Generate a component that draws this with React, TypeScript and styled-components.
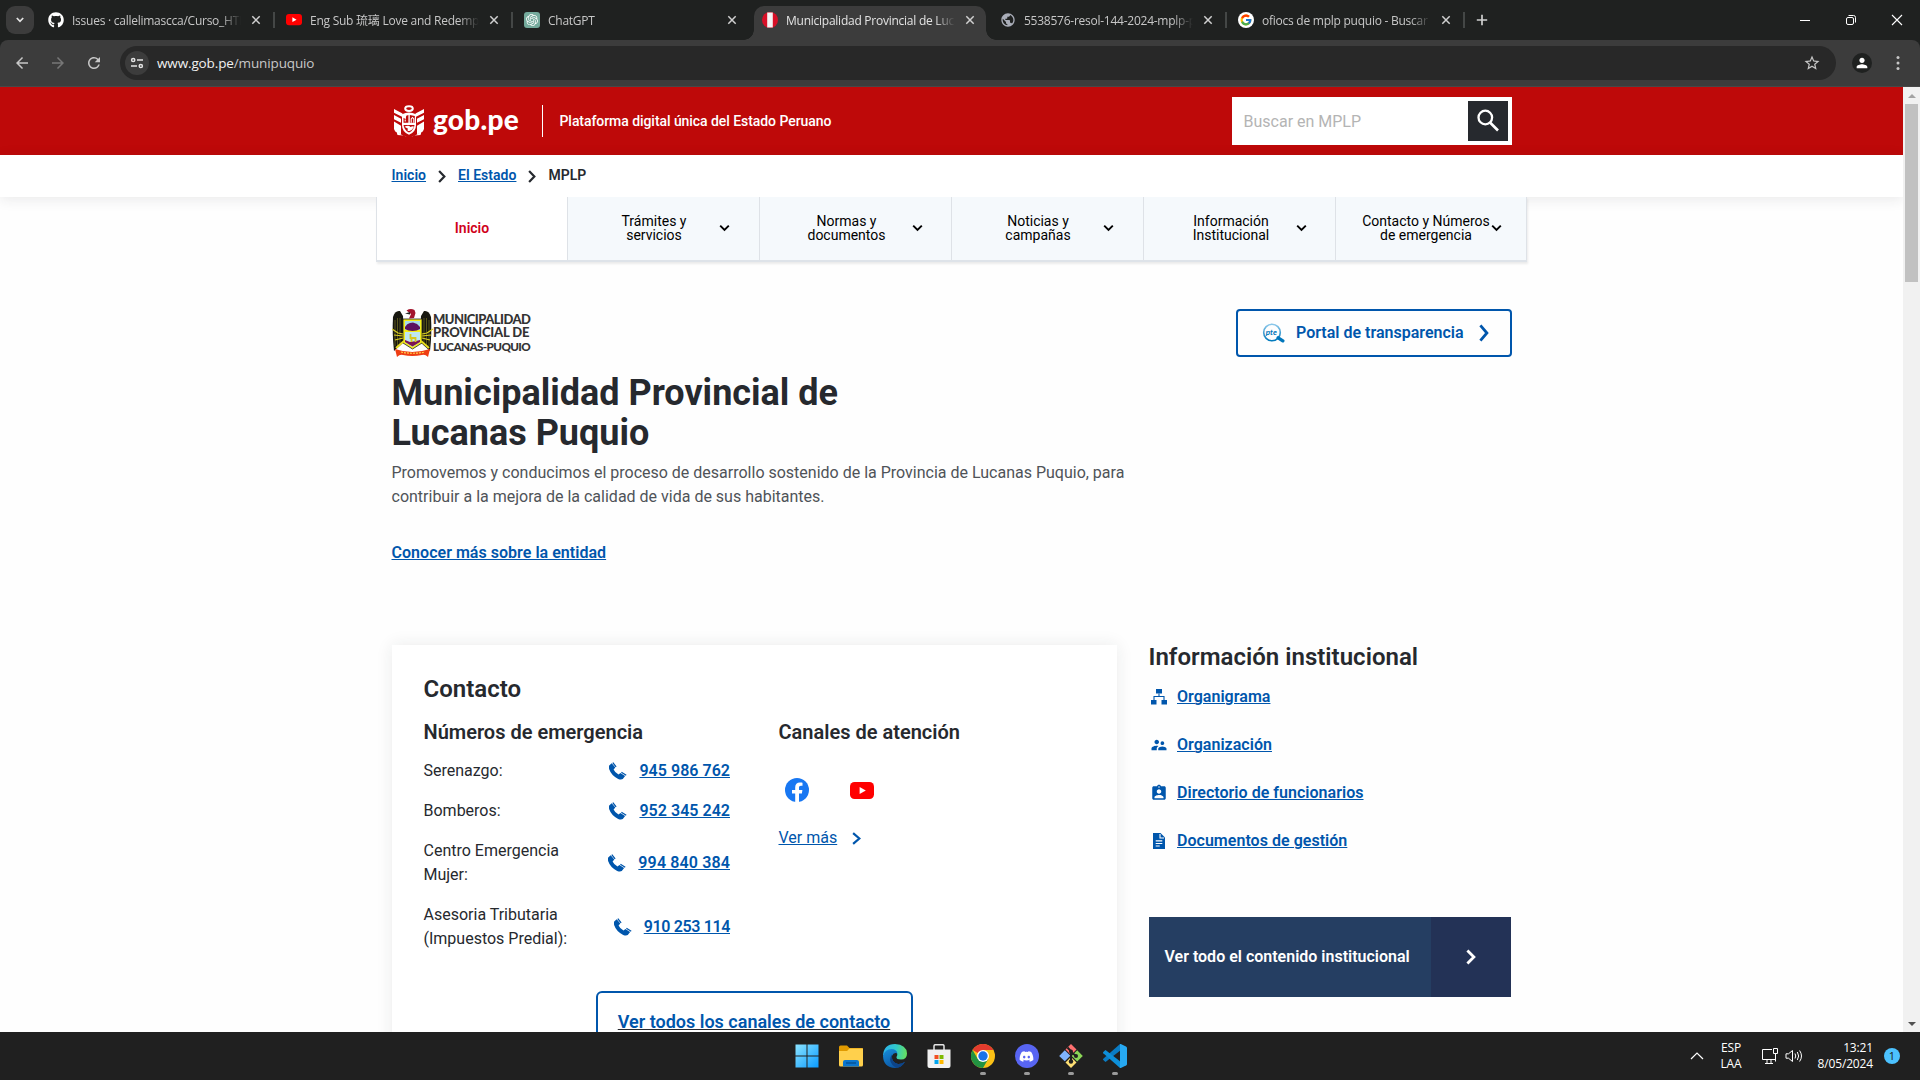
import React from 'react';
import styled, { createGlobalStyle, css } from 'styled-components';
import { FaGithub, FaDiscord } from 'react-icons/fa';
import { SiOpenai } from 'react-icons/si';
import { FcGoogle } from 'react-icons/fc';
import {
  MdSupervisorAccount,
  MdAssignmentInd,
  MdStarBorder,
  MdRefresh,
  MdArrowBack,
  MdArrowForward,
  MdPerson,
  MdPublic,
} from 'react-icons/md';

const ui = '"Open Sans", "Noto Sans", "Noto Sans CJK TC", sans-serif';
const blue = '#0056ac';
const ink = '#26292e';

const Global = createGlobalStyle`
  * { box-sizing: border-box; }
  html, body { margin: 0; padding: 0; overflow: hidden; background: #202020; }
  body { font-family: Roboto, "Liberation Sans", sans-serif; color: ${ink}; }
  svg { display: block; flex: none; }
  h1, h2, h3, p, ul { margin: 0; padding: 0; font-weight: 400; list-style: none; }
`;

const Screen = styled.div`
  width: 1920px;
  height: 1080px;
  display: flex;
  flex-direction: column;
  overflow: hidden;
`;

/* ---------- browser chrome ---------- */

const TabStrip = styled.div`
  height: 40px;
  flex: none;
  display: flex;
  align-items: flex-end;
  background: #1f2120;
  padding-left: 6px;
  font-family: ${ui};
`;

const TabSearch = styled.div`
  width: 28px;
  height: 28px;
  margin: 0 4px 6px 0;
  border-radius: 9px;
  background: #3c3c3c;
  display: grid;
  place-items: center;
`;

const Tab = styled.div<{ $active?: boolean; $sep?: boolean }>`
  position: relative;
  width: 238px;
  height: 34px;
  flex: none;
  display: flex;
  align-items: center;
  padding: 0 15px 6px 10px;
  font-size: 12px;
  color: ${p => (p.$active ? '#e3e3e3' : '#c7c7c7')};
  ${p =>
    p.$active &&
    css`
      &::before {
        content: '';
        position: absolute;
        inset: 0 4px 0 2px;
        border-radius: 10px 10px 0 0;
        background: #3c3c3c;
      }
      &::after {
        content: '';
        position: absolute;
        left: -8px;
        right: -6px;
        bottom: 0;
        height: 10px;
        background: radial-gradient(circle at 0 0, transparent 9.5px, #3c3c3c 10px) left / 10px 10px no-repeat,
          radial-gradient(circle at 100% 0, transparent 9.5px, #3c3c3c 10px) right / 10px 10px no-repeat;
      }
    `}
  ${p =>
    p.$sep &&
    css`
      background: linear-gradient(#444746, #444746) right 1px top 6px / 2px 16px no-repeat;
    `}
  > * {
    position: relative;
  }
`;

const TabTitle = styled.span`
  flex: 1;
  min-width: 0;
  margin: 0 10px 0 8px;
  overflow: hidden;
  white-space: nowrap;
  letter-spacing: -0.25px;
  mask-image: linear-gradient(90deg, #000 88%, transparent);
`;

const NewTab = styled.div`
  width: 32px;
  height: 34px;
  padding: 0 0 6px;
  display: grid;
  place-items: center;
`;

const WindowControls = styled.div`
  margin-left: auto;
  height: 40px;
  display: flex;
  > svg {
    margin: 14px 17px 0 17px;
  }
`;

const Toolbar = styled.div`
  height: 47px;
  display: flex;
  align-items: center;
  padding: 0 0 1px 13px;
  background: #3c3c3c;
  border-bottom: 1px solid #474747;
  border-radius: 8px 8px 0 0;
  color: #c7c7c7;
  font-family: ${ui};
`;

const ToolbarWrap = styled.div`
  background: #1f2120;
  flex: none;
`;

const NavIcon = styled.div<{ $dim?: boolean }>`
  width: 36px;
  height: 18px;
  display: flex;
  font-size: 18px;
  color: ${p => (p.$dim ? '#777' : '#c7c7c7')};
`;

const Omnibox = styled.div`
  width: 1716px;
  height: 34px;
  margin-left: -1px;
  border-radius: 17px;
  background: #282828;
  display: flex;
  align-items: center;
  padding: 0 15px 0 5px;
`;

const SiteInfo = styled.div`
  width: 24px;
  height: 24px;
  border-radius: 12px;
  background: #3c3c3c;
  display: grid;
  place-items: center;
`;

const Url = styled.span`
  flex: 1;
  margin-left: 8px;
  font-size: 13.5px;
  letter-spacing: -0.13px;
  color: #c7c7c7;
  b {
    font-weight: 400;
    color: #f1f1f1;
  }
`;

const Profile = styled.div`
  width: 20px;
  height: 20px;
  margin: 0 24px 0 16px;
  border-radius: 10px;
  background: #1f2120;
  color: #fff;
  display: grid;
  place-items: center;
`;

/* ---------- page ---------- */

const Viewport = styled.div`
  height: 945px;
  flex: none;
  display: flex;
  overflow: hidden;
  background: #fefefe;
`;

const Page = styled.main`
  width: 1903px;
  height: 945px;
  overflow: hidden;
`;

const Container = styled.div`
  width: 1152px;
  margin: 0 auto;
  padding: 0 16px;
`;

const RedBar = styled.header`
  height: 68px;
  background: #be0909;
  color: #fff;
`;

const RedInner = styled(Container)`
  height: 68px;
  display: flex;
  align-items: center;
  > svg {
    margin: -1px 0 0 1.5px;
  }
`;

const Brand = styled.span`
  width: 86px;
  margin: -5px 0 0 8px;
  font: 900 28px/34px Lato, sans-serif;
  letter-spacing: 0.25px;
  white-space: nowrap;
`;

const Tagline = styled.span`
  margin: -1px 0 0 23px;
  padding: 8px 0 8px 16.5px;
  border-left: 1px solid #fff;
  font-size: 14px;
  line-height: 16px;
  letter-spacing: -0.06px;
  font-weight: 500;
  white-space: nowrap;
`;

const Search = styled.div`
  width: 280px;
  height: 48px;
  margin-left: auto;
  padding: 4px 4px 4px 12px;
  display: flex;
  align-items: center;
  justify-content: space-between;
  background: #fff;
  color: #b4b4b4;
  font-size: 16px;
`;

const SearchButton = styled.div`
  width: 40px;
  height: 40px;
  background: ${ink};
  display: grid;
  place-items: center;
`;

const CrumbBar = styled.div`
  position: relative;
  height: 42px;
  background: #fff;
  box-shadow: 0 2px 14px rgba(38, 41, 46, 0.1);
`;

const Crumbs = styled(Container)`
  height: 42px;
  padding-bottom: 2px;
  display: flex;
  align-items: center;
  font-size: 14px;
  font-weight: 600;
  > svg {
    margin: 2px 12px 0 12px;
  }
`;

const Anchor = styled.a<{ $size?: number; $weight?: number; $spacing?: number }>`
  color: ${blue};
  font-size: ${p => p.$size ?? 16}px;
  font-weight: ${p => p.$weight ?? 600};
  letter-spacing: ${p => p.$spacing ?? 0.03}px;
  text-decoration: underline;
  text-underline-offset: 1px;
  text-decoration-thickness: 1px;
  text-decoration-skip-ink: auto;
  white-space: nowrap;
`;

const Menu = styled.nav`
  position: relative;
  width: 1151px;
  height: 65px;
  margin: 0 auto;
  display: grid;
  grid-template-columns: 191px 192px 192px 192px 192px 1fr;
  border-left: 1px solid #dee2e7;
  border-bottom: 2px solid #dee3e9;
  box-shadow: 1px 2px 2px rgba(0, 0, 0, 0.08);
  background: #f5f9fc;
`;

const MenuItem = styled.div<{ $active?: boolean; $shift?: number }>`
  display: flex;
  align-items: center;
  padding: 0 0 1.5px ${p => 21.5 + (p.$shift ?? 0)}px;
  border-right: 1px solid #dee2e7;
  font-size: 14px;
  line-height: 14px;
  color: #000;
  ${p =>
    p.$active &&
    css`
      padding: 0 0 1.5px;
      justify-content: center;
      background: #fff;
      color: #d0021b;
      font-weight: 600;
    `}
`;

const MenuLabel = styled.span`
  width: 129px;
  margin-right: -0.5px;
  text-align: center;
  white-space: pre;
`;

const Hero = styled(Container)`
  height: 383px;
  padding-top: 47px;
  display: flex;
  justify-content: space-between;
  align-items: flex-start;
`;

const Entity = styled.div`
  display: flex;
  align-items: center;
  height: 48px;
`;

const EntityName = styled.div`
  margin: 0 0 0 0.5px;
  font-family: Lato, sans-serif;
  font-weight: 900;
  line-height: 13.3px;
  color: #333;
  white-space: nowrap;
`;

const EntityLine = styled.span<{ $spacing: number; $size: number }>`
  display: block;
  letter-spacing: ${p => p.$spacing}px;
  font-size: ${p => p.$size}px;
`;

const Title = styled.h1`
  margin-top: 16px;
  font-size: 36px;
  line-height: 40px;
  font-weight: 700;
`;

const Lead = styled.p`
  margin-top: 8px;
  font-size: 16px;
  line-height: 24px;
  color: #4f5358;
  white-space: nowrap;
`;

const HeroLink = styled.div`
  margin-top: 32px;
  line-height: 24px;
`;

const Portal = styled.a`
  width: 276px;
  height: 48px;
  padding: 0 21px 1px 24px;
  display: flex;
  align-items: center;
  border: 2px solid ${blue};
  border-radius: 4px;
  color: ${blue};
  font-size: 16px;
  font-weight: 600;
  span {
    flex: 1;
    margin-left: 10.5px;
    white-space: nowrap;
  }
`;

const Columns = styled(Container)`
  display: flex;
  justify-content: space-between;
  align-items: flex-start;
`;

const Card = styled.section`
  width: 725px;
  height: 420px;
  padding: 32px;
  background: #fff;
  box-shadow: 0 0 16px rgba(38, 41, 46, 0.09);
`;

const H2 = styled.h2`
  font-size: 24px;
  line-height: 24px;
  font-weight: 600;
  letter-spacing: 0.02px;
  white-space: nowrap;
`;

const H3 = styled.h3`
  font-size: 20px;
  line-height: 28px;
  font-weight: 600;
  white-space: nowrap;
`;

const CardBody = styled.div`
  display: flex;
  margin-top: 17px;
  height: 248px;
`;

const Phones = styled.div`
  width: 306.5px;
  margin-right: 48.5px;
`;

const PhoneRow = styled.div`
  display: flex;
  justify-content: space-between;
  align-items: center;
  margin-bottom: 16px;
  line-height: 24px;
  font-size: 16px;
  color: ${ink};
  span {
    white-space: pre;
  }
`;

const PhoneRows = styled.div`
  margin-top: 13px;
`;

const PhoneLink = styled.div`
  display: flex;
  align-items: center;
  gap: 12px;
`;

const Social = styled.div`
  display: flex;
  align-items: center;
  gap: 41px;
  height: 24px;
  margin: 32px 0 24px 6.5px;
`;

const MoreLink = styled.div`
  display: flex;
  align-items: center;
  gap: 15px;
  line-height: 24px;
`;

const ContactButton = styled.a`
  width: 317px;
  height: 62px;
  margin: 25px auto 0;
  display: block;
  text-align: center;
  border: 2px solid ${blue};
  border-radius: 6px;
  color: ${blue};
  font-size: 18px;
  line-height: 58px;
  font-weight: 600;
  text-decoration: underline;
  text-decoration-color: ${ink};
  text-decoration-thickness: 1px;
  text-underline-offset: 1px;
`;

const Side = styled.aside`
  width: 362px;
  margin-right: 1px;
`;

const SideList = styled.ul`
  margin-top: 15px;
`;

const SideItem = styled.li`
  display: flex;
  align-items: center;
  gap: 9.5px;
  height: 24px;
  margin-bottom: 24px;
  color: ${blue};
  svg {
    margin: 1px 0 0 1px;
  }
`;

const Banner = styled.a`
  height: 80px;
  margin-top: 65px;
  display: grid;
  grid-template-columns: 1fr 80px;
  background: #253e62;
  color: #fff;
  font-size: 16px;
  font-weight: 600;
`;

const BannerText = styled.span`
  padding-left: 16px;
  line-height: 80px;
  white-space: nowrap;
`;

const BannerArrow = styled.span`
  background: #233256;
  display: grid;
  place-items: center;
`;

const Scrollbar = styled.div`
  width: 17px;
  height: 945px;
  display: flex;
  flex-direction: column;
  align-items: center;
  justify-content: space-between;
  background: #f1f1f1;
`;

const ScrollEnd = styled.div<{ $down?: boolean }>`
  width: 17px;
  height: 17px;
  display: grid;
  place-items: center;
  &::before {
    content: '';
    border: 4px solid transparent;
    ${p =>
      p.$down
        ? 'border-top-color:#505050;border-bottom:0;'
        : 'border-bottom-color:#a3a3a3;border-top:0;'}
  }
`;

const Thumb = styled.div`
  width: 13px;
  height: 178px;
  margin-bottom: auto;
  background: #c1c1c1;
`;

/* ---------- taskbar ---------- */

const Taskbar = styled.footer`
  height: 48px;
  flex: none;
  display: grid;
  grid-template-columns: 1fr 352px 1fr;
  background: #202020;
  color: #fff;
  font-family: ${ui};
`;

const Apps = styled.div`
  grid-column: 2;
  display: flex;
  margin-left: 0.5px;
`;

const AppSlot = styled.div<{ $running?: boolean }>`
  width: 44px;
  flex: none;
  height: 48px;
  padding-top: 12px;
  display: flex;
  flex-direction: column;
  align-items: center;
  &::after {
    content: '';
    width: 6px;
    height: 3px;
    margin-top: 4px;
    border-radius: 2px;
    background: ${p => (p.$running ? '#9a9a9a' : 'transparent')};
  }
`;

const Tray = styled.div`
  display: flex;
  justify-content: flex-end;
  align-items: center;
  padding-right: 20px;
`;

const TrayText = styled.div<{ $align?: string; $width: number }>`
  width: ${p => p.$width}px;
  text-align: ${p => p.$align ?? 'center'};
  font-size: 12px;
  line-height: 16px;
  letter-spacing: -0.15px;
  white-space: nowrap;
`;

const TrayIcons = styled.div`
  display: flex;
  align-items: center;
  gap: 6px;
  margin: 0 14px 0 3px;
`;

const Badge = styled.div`
  width: 16px;
  height: 16px;
  margin-left: 11px;
  border-radius: 8px;
  background: #4cc2ff;
  color: #1a1a1a;
  font-size: 11px;
  line-height: 16px;
  text-align: center;
`;

/* ---------- drawings ---------- */

const Chevron = ({ w = 8, h = 12, stroke = 2, color = ink }) => (
  <svg width={w} height={h} viewBox={`0 0 ${w} ${h}`} fill="none">
    <path
      d={`M${stroke / 2} ${stroke / 2} L${w - stroke * 0.75} ${h / 2} L${stroke / 2} ${h - stroke / 2}`}
      stroke={color}
      strokeWidth={stroke}
    />
  </svg>
);

const Down = () => (
  <svg width="14" height="10" viewBox="0 0 14 10" fill="none" stroke="#000" strokeWidth="1.9">
    <path d="M2.2 2.6 6.5 7 10.800 2.600" />
  </svg>
);

const Cross = () => (
  <svg width="10" height="10" viewBox="0 0 10 10" stroke="#d0d0d0" strokeWidth="1.5">
    <path d="M1.3 1.3l7.4 7.4M8.7 1.3l-7.4 7.4" />
  </svg>
);

const YouTube = ({ w = 24 }) => (
  <svg width={w} height={(w * 17) / 24} viewBox="0 0 24 17">
    <rect width="24" height="17" rx="4.5" fill="#f00" />
    <path d="M9.6 5v7l6.2-3.5z" fill="#fff" />
  </svg>
);

const Shield = () => (
  <svg width="32" height="32" viewBox="0 0 32 32" fill="#fff">
    <ellipse cx="16" cy="3.6" rx="3.8" ry="2.4" fill="none" stroke="#fff" strokeWidth="2" />
    <path d="M1 4 9.500 8.500v3.600L1 7.800zM31 4 22.500 8.500v3.600L31 7.800z" />
    <path d="M1 10l7 3.800v4L1 14.200zM31 10l-7 3.800v4l7-3.600z" />
    <path d="M1 16.500l7 4.200v8.500L2.200 26.500 1 24zM31 16.500l-7 4.200v8.500l5.800-2.700L31 24z" />
    <path d="M3 25l5 4.500 5 2h6l5-2 5-4.500-1.500 5-6 .5-3 1h-5l-3-1-6-.5z" />
    <path d="M9 9.300q7-3.600 14 0V20q0 7-7 9.800Q9 27 9 20z" />
    <path d="M15.400 10v7.800h-4.900v-5l2.200 1.500.5-3.500zM16.800 10l5 1v6.800h-5z" fill="#be0909" />
    <path d="M18.200 17.800v-3.800l1.300-1.500 1.300 1.500v3.800M12.200 16.500v-2" stroke="#fff" strokeWidth="1.100" fill="none" />
    <path d="M10.500 20h11q-.5 5-5.500 7.600Q11 25 10.500 20z" fill="#be0909" />
    <path d="M11.500 21.800q4-2 6 .3 3-1.800 3.500 0-2 3.400-4.500 4-3 .2-1.500-2.300z" />
  </svg>
);

const Crest = () => (
  <svg width="41" height="48" viewBox="0 0 41 48">
    <path d="M1 8Q3 1 8 2l3 5 1 26-10 9Q0 24 1 8z" fill="#17170f" />
    <path d="M39 8q-2-7-7-6l-3 5-1 26 10 9q2-18 1-34z" fill="#17170f" />
    <path d="M3 11v26M5.500 9v28M8 9v26M37 11v26M34.500 9v28M32 9v26" stroke="#6b6620" strokeWidth=".8" />
    <path d="M11 10h19v24l-9.500 6L11 34z" fill="#f4ee1a" stroke="#222" strokeWidth=".8" />
    <path d="M13 12h15v9H13z" fill="#a9dbe8" />
    <path d="M13 23h15v10l-7.500 5-7.500-5z" fill="#bfe7f2" />
    <path d="M13 18q2-3.500 5-4l3-.5 4 1.500 3 3v2q-3 2-7.500 2T13 20z" fill="#5b1260" />
    <path d="M13 31l5 2 6-1 4-1v2l-7.500 4.500L13 33z" fill="#7c1452" />
    <path d="M18.500 25v4h5v4M19.500 29v4" stroke="#d9c81e" strokeWidth="1.800" fill="none" />
    <path d="M0 20l6 4 5 1M41 20l-6 4-5 1M3 31l8-2M38 31l-8-2M2 26l9 1M39 26l-9 1" stroke="#ddd021" strokeWidth="1.200" fill="none" />
    <path d="M4 39l8-7M37 39l-8-7" stroke="#e8dd20" strokeWidth="2" />
    <path d="M14.500 1.500q4-2.500 8-.5l1 3-1.500 5-5 .5 2-4.500z" fill="#a3142c" />
    <path d="M13 4.500l5-1.500v2.500z" fill="#222" />
    <path d="M3 40q17 6 35 0l-2 8q-3-3-6-2-10 2-19 0-3-1-6 2z" fill="#ef3d13" />
    <path d="M9 43q12 2.500 24 0" stroke="#ffd34d" strokeWidth="1.200" fill="none" strokeDasharray="2 1" />
  </svg>
);

const PteIcon = () => (
  <svg width="24" height="20" viewBox="0 0 24 20">
    <defs>
      <linearGradient id="pte" x1="0" y1="0" x2="0" y2="1">
        <stop offset="0" stopColor="#8cc8ea" />
        <stop offset="1" stopColor="#0079bd" />
      </linearGradient>
    </defs>
    <circle cx="10" cy="9.5" r="8.3" fill="none" stroke="url(#pte)" strokeWidth="1.6" />
    <path d="M16.200 14.800l4.600 3" stroke="#0076bb" strokeWidth="3.400" strokeLinecap="round" />
    <text x="3.8" y="11.8" fontSize="8" fontStyle="italic" fontWeight="700" fill="#0076bb" fontFamily="Lato, sans-serif">
      pte
    </text>
  </svg>
);

const Phone = () => (
  <svg width="18" height="18" viewBox="0 0 18 18">
    <path
      d="M.2 3.400 2.700 1.300l3.600 4.300-1.700 1.800q1.600 3.400 4.900 5.200l1.900-1.500 4.700 3-2.300 3q-1.900.9-4.600-.2Q2.400 13.700.2 7.300q-.6-2.300 0-3.900z"
      fill={blue}
    />
    <path d="M3.800.6 7.100 4.800M12.400 10.300l4.800 3" stroke={blue} strokeWidth="1.300" />
  </svg>
);

const Facebook = () => (
  <svg width="24" height="24" viewBox="0 0 24 24">
    <circle cx="12" cy="12" r="12" fill="#1877f2" />
    <path
      d="M10.200 24v-8.500H7V12h3.200V9.300c0-3.100 1.800-4.800 4.600-4.800 1.300 0 2.700.2 2.700.2v3h-1.500c-1.500 0-2 .9-2 1.900V12h3.400l-.5 3.500H14V24z"
      fill="#fff"
    />
  </svg>
);

const OrgChart = () => (
  <svg width="18" height="18" viewBox="0 0 18 18" fill={blue}>
    <path d="M6 1h6v4.500H6zM1 12h5.500v4.500H1zM11.500 12H17v4.500h-5.500z" />
    <path d="M9 5.500v3M4 12V8.500h10V12" fill="none" stroke={blue} strokeWidth="1.100" />
  </svg>
);

const Doc = () => (
  <svg width="18" height="18" viewBox="0 0 18 18">
    <path d="M3 1h7.500L15 5.500V17H3z" fill={blue} />
    <path d="M10 2v4h4M5.700 8.900h6.600M5.700 11.500h6.600M5.700 14h4" stroke="#fff" strokeWidth="1.100" fill="none" />
  </svg>
);

const Windows = () => (
  <svg width="24" height="24" viewBox="0 0 24 24">
    <defs>
      <linearGradient id="win" x1="0" y1="0" x2="1" y2="1">
        <stop offset="0" stopColor="#8be3ff" />
        <stop offset="1" stopColor="#0a9bff" />
      </linearGradient>
    </defs>
    <path d="M.5.5h11v11H.5zM12.500.5h11v11h-11zM.5 12.500h11v11H.5zM12.500 12.500h11v11h-11z" fill="url(#win)" />
  </svg>
);

const Folder = () => (
  <svg width="24" height="24" viewBox="0 0 24 24">
    <path d="M0 3q0-1.500 1.500-1.500H8L10.500 4H23q1 0 1 1v7H0z" fill="#e09a00" />
    <path d="M0 7h8l2.500-2.500H24V21q0 1.500-1.500 1.500h-21Q0 22.500 0 21z" fill="#ffd04c" />
    <path d="M4 22.500V18q0-2 2-2h12q2 0 2 2v4.500z" fill="#0b76cf" />
    <path d="M7 19h10" stroke="#06508f" strokeWidth="1.300" />
  </svg>
);

const Edge = () => (
  <svg width="24" height="24" viewBox="0 0 24 24">
    <defs>
      <linearGradient id="ed1" x1="0" y1=".3" x2="1" y2=".4">
        <stop offset="0" stopColor="#2bb3ee" />
        <stop offset=".55" stopColor="#31c9c8" />
        <stop offset="1" stopColor="#66e05f" />
      </linearGradient>
      <linearGradient id="ed2" x1="0" y1="0" x2=".6" y2="1">
        <stop offset="0" stopColor="#1790dd" />
        <stop offset="1" stopColor="#0b52a0" />
      </linearGradient>
    </defs>
    <path d="M0 12Q.5 0 12 0q11.500.5 12 9.500 0 6-6 6-5 0-4.500-2.500 1.500-1.500.5-4Q8 3 0 12z" fill="url(#ed1)" />
    <path d="M0 12q2-7 8.500-7 5 .2 6 4.500-4-1.500-5.500 2.500-.8 6.500 6 8 4 .3 7-2.200Q18.500 24 12 24 .5 23.500 0 12z" fill="url(#ed2)" />
    <path d="M9 10.500q-4 5.500.5 10.500 2 2.200 4.500 2.800 5-.6 8-6-3.500 2.400-7 2.100-7-1.500-6-9.400z" fill="#0d4489" />
  </svg>
);

const Store = () => (
  <svg width="24" height="24" viewBox="0 0 24 24">
    <path d="M7 6V2q0-1.300 1.300-1.300h7.400Q17 .7 17 2v4" stroke="#e4e4e4" strokeWidth="1.500" fill="none" />
    <path d="M.5 5.500h23V22q0 2-2 2h-19q-2 0-2-2z" fill="#f1f1f1" />
    <path d="M7.500 11h4v4h-4z" fill="#f25022" />
    <path d="M12.500 11h4v4h-4z" fill="#7fba00" />
    <path d="M7.500 16h4v4h-4z" fill="#00a4ef" />
    <path d="M12.500 16h4v4h-4z" fill="#ffb900" />
  </svg>
);

const ChromeLogo = () => (
  <svg width="24" height="24" viewBox="0 0 24 24">
    <circle cx="12" cy="12" r="12" fill="#fbc116" />
    <path d="M12 12 1.600 6A12 12 0 0 1 22.400 6H12z" fill="#e33b2e" />
    <path d="M1.600 6A12 12 0 0 0 12 24l5.200-9L12 12 6.800 15z" fill="#229342" />
    <path d="M12 6.500h10.700L17 15z" fill="#fbc116" />
    <circle cx="12" cy="12" r="6" fill="#fff" />
    <circle cx="12" cy="12" r="4.7" fill="#1a73e8" />
  </svg>
);

const DiscordDisc = styled.div`
  width: 24px;
  height: 24px;
  border-radius: 12px;
  background: #5865f2;
  color: #fff;
  display: grid;
  place-items: center;
`;

const GitLogo = () => (
  <svg width="24" height="24" viewBox="0 0 24 24">
    <path d="M12 0l5.500 5.500L12 11 6.500 5.500z" fill="#ff7070" />
    <path d="M5.800 6.200 11.300 11.700 5.800 17.200.2 12z" fill="#80b3ff" />
    <path d="M18.200 6.200l5.600 5.800-5.600 5.500-5.500-5.500z" fill="#8bd657" />
    <path d="M12 13l5.500 5.500L12 24l-5.500-5.500z" fill="#ffe074" />
    <path d="M8.500 3.500 12 7.300V18M12 8l5 4" stroke="#202020" strokeWidth="2" fill="none" />
    <circle cx="12" cy="7.5" r="2" fill="#202020" />
    <circle cx="17" cy="12" r="2" fill="#202020" />
    <circle cx="12" cy="17.5" r="2.2" fill="#202020" />
  </svg>
);

const Code = () => (
  <svg width="24" height="24" viewBox="0 0 24 24">
    <path d="M17 0v6.800L2.500 18 .3 16.100q-.6-.7 0-1.300z" fill="#0a7cc4" />
    <path d="M17 24v-6.800L2.500 6 .3 7.900q-.6.700 0 1.300z" fill="#0d8fd9" />
    <path d="M17 0q.3-.2.8 0l5.200 2.500q1 .5 1 1.500v16q0 1-1 1.500L17.800 24q-.5.200-.8 0z" fill="#27a9f2" />
  </svg>
);

const tabs = [
  { title: 'Issues · callelimascca/Curso_HTML', icon: <FaGithub size={16} color="#fff" />, sep: true },
  { title: 'Eng Sub 琉璃 Love and Redemption', icon: <YouTube w={16} />, sep: true },
  {
    title: 'ChatGPT',
    icon: (
      <svg width="16" height="16" viewBox="0 0 16 16">
        <rect width="16" height="16" rx="3" fill="#74aa9c" />
        <SiOpenai x="2" y="2" size={12} color="#fff" />
      </svg>
    ),
  },
  {
    title: 'Municipalidad Provincial de Lucanas',
    active: true,
    icon: (
      <svg width="16" height="16" viewBox="0 0 16 16">
        <circle cx="8" cy="8" r="8" fill="#d80f27" />
        <path d="M5.200 .5h5.600v15H5.200z" fill="#f4f4f4" />
      </svg>
    ),
  },
  { title: '5538576-resol-144-2024-mplp-puquio', icon: <MdPublic size={16} color="#a9adb8" />, sep: true },
  {
    title: 'ofiocs de mplp puquio - Buscar con',
    sep: true,
    icon: (
      <svg width="16" height="16" viewBox="0 0 16 16">
        <circle cx="8" cy="8" r="8" fill="#fff" />
        <FcGoogle x="1.5" y="1.5" size={13} />
      </svg>
    ),
  },
];

const menu = [
  { label: 'Trámites y\nservicios' },
  { label: 'Normas y\ndocumentos', shift: 0.5 },
  { label: 'Noticias y\ncampañas' },
  { label: 'Información\nInstitucional', shift: 1 },
  { label: 'Contacto y Números\nde emergencia', shift: 4 },
];

const phones = [
  { name: 'Serenazgo:', number: '945 986 762' },
  { name: 'Bomberos:', number: '952 345 242' },
  { name: 'Centro Emergencia\nMujer:', number: '994 840 384', spacing: 0.13 },
  { name: 'Asesoria Tributaria\n(Impuestos Predial):', number: '910 253 114', spacing: -0.36 },
];

const links = [
  { label: 'Organigrama', icon: <OrgChart /> },
  { label: 'Organización', icon: <MdSupervisorAccount size={18} /> },
  { label: 'Directorio de funcionarios', icon: <MdAssignmentInd size={18} /> },
  { label: 'Documentos de gestión', icon: <Doc /> },
];

const apps = [
  { icon: <Windows /> },
  { icon: <Folder /> },
  { icon: <Edge /> },
  { icon: <Store /> },
  { icon: <ChromeLogo />, running: true },
  { icon: <DiscordDisc><FaDiscord size={15} /></DiscordDisc>, running: true },
  { icon: <GitLogo />, running: true },
  { icon: <Code />, running: true },
];

export default function App() {
  return (
    <Screen>
      <Global />
      <TabStrip>
        <TabSearch>
          <svg width="8" height="6" viewBox="0 0 8 6" fill="none" stroke="#e3e3e3" strokeWidth="1.7">
            <path d="M.8 1 4 4.300 7.200 1" />
          </svg>
        </TabSearch>
        {tabs.map(t => (
          <Tab key={t.title} $active={t.active} $sep={t.sep}>
            {t.icon}
            <TabTitle>{t.title}</TabTitle>
            <Cross />
          </Tab>
        ))}
        <NewTab>
          <svg width="12" height="12" viewBox="0 0 12 12" stroke="#d0d0d0" strokeWidth="1.7">
            <path d="M6 .8v10.400M.8 6h10.400" />
          </svg>
        </NewTab>
        <WindowControls>
          <svg width="12" height="12" viewBox="0 0 12 12">
            <path d="M1 6.500h10" stroke="#fff" />
          </svg>
          <svg width="12" height="12" viewBox="0 0 12 12" fill="none" stroke="#fff">
            <rect x="1.5" y="3.5" width="7" height="7" rx="1.5" />
            <path d="M3.500 1.500H8.500q2 0 2 2v5" />
          </svg>
          <svg width="12" height="12" viewBox="0 0 12 12" stroke="#fff" strokeWidth="1.1">
            <path d="M1 1l10 10M11 1 1 11" />
          </svg>
        </WindowControls>
      </TabStrip>
      <ToolbarWrap>
        <Toolbar>
          <NavIcon><MdArrowBack /></NavIcon>
          <NavIcon $dim><MdArrowForward /></NavIcon>
          <NavIcon><MdRefresh /></NavIcon>
          <Omnibox>
            <SiteInfo>
              <svg width="14" height="12" viewBox="0 0 14 12" fill="none" stroke="#e3e3e3" strokeWidth="1.5">
                <circle cx="3.2" cy="3" r="1.6" />
                <path d="M7 3h6M1 9h6" />
                <circle cx="10.8" cy="9" r="1.6" />
              </svg>
            </SiteInfo>
            <Url><b>www.gob.pe</b>/munipuquio</Url>
            <MdStarBorder size={18} />
          </Omnibox>
          <Profile><MdPerson size={16} /></Profile>
          <svg width="4" height="16" viewBox="0 0 4 16" fill="#c7c7c7">
            <circle cx="2" cy="2.5" r="1.5" />
            <circle cx="2" cy="8" r="1.5" />
            <circle cx="2" cy="13.5" r="1.5" />
          </svg>
        </Toolbar>
      </ToolbarWrap>
      <Viewport>
        <Page>
          <RedBar>
            <RedInner>
              <Shield />
              <Brand>gob.pe</Brand>
              <Tagline>Plataforma digital única del Estado Peruano</Tagline>
              <Search>
                Buscar en MPLP
                <SearchButton>
                  <svg width="24" height="24" viewBox="0 0 24 24" fill="none" stroke="#fff" strokeWidth="2.3">
                    <circle cx="9.3" cy="8.5" r="6.8" />
                    <path d="M14 13.500l8 8" strokeWidth="2.6" />
                  </svg>
                </SearchButton>
              </Search>
            </RedInner>
          </RedBar>
          <CrumbBar>
            <Crumbs>
              <Anchor $size={14}>Inicio</Anchor>
              <Chevron w={8} h={13} stroke={2.2} />
              <Anchor $size={14}>El Estado</Anchor>
              <Chevron w={8} h={13} stroke={2.2} />
              MPLP
            </Crumbs>
          </CrumbBar>
          <Menu>
            <MenuItem $active>Inicio</MenuItem>
            {menu.map(m => (
              <MenuItem key={m.label} $shift={m.shift}>
                <MenuLabel>{m.label}</MenuLabel>
                <Down />
              </MenuItem>
            ))}
          </Menu>
          <Hero>
            <div>
              <Entity>
                <Crest />
                <EntityName>
                  <EntityLine $spacing={-0.55} $size={13}>MUNICIPALIDAD</EntityLine>
                  <EntityLine $spacing={-0.15} $size={13}>PROVINCIAL DE</EntityLine>
                  <EntityLine $spacing={-0.62} $size={11.7}>LUCANAS-PUQUIO</EntityLine>
                </EntityName>
              </Entity>
              <Title>Municipalidad Provincial de<br />Lucanas Puquio</Title>
              <Lead>
                Promovemos y conducimos el proceso de desarrollo sostenido de la Provincia de Lucanas Puquio, para
                <br />
                contribuir a la mejora de la calidad de vida de sus habitantes.
              </Lead>
              <HeroLink><Anchor>Conocer más sobre la entidad</Anchor></HeroLink>
            </div>
            <Portal>
              <PteIcon />
              <span>Portal de transparencia</span>
              <Chevron w={10} h={18} stroke={2.8} color={blue} />
            </Portal>
          </Hero>
          <Columns>
            <Card>
              <H2>Contacto</H2>
              <CardBody>
                <Phones>
                  <H3>Números de emergencia</H3>
                  <PhoneRows>
                    {phones.map(p => (
                      <PhoneRow key={p.name}>
                        <span>{p.name}</span>
                        <PhoneLink>
                          <Phone />
                          <Anchor $spacing={p.spacing}>{p.number}</Anchor>
                        </PhoneLink>
                      </PhoneRow>
                    ))}
                  </PhoneRows>
                </Phones>
                <div>
                  <H3>Canales de atención</H3>
                  <Social>
                    <Facebook />
                    <YouTube />
                  </Social>
                  <MoreLink>
                    <Anchor $weight={400} $spacing={0}>Ver más</Anchor>
                    <Chevron w={9} h={13} stroke={2.2} color={blue} />
                  </MoreLink>
                </div>
              </CardBody>
              <ContactButton>Ver todos los canales de contacto</ContactButton>
            </Card>
            <Side>
              <H2>Información institucional</H2>
              <SideList>
                {links.map(l => (
                  <SideItem key={l.label}>
                    {l.icon}
                    <Anchor>{l.label}</Anchor>
                  </SideItem>
                ))}
              </SideList>
              <Banner>
                <BannerText>Ver todo el contenido institucional</BannerText>
                <BannerArrow><Chevron w={10} h={16} stroke={2.8} color="#fff" /></BannerArrow>
              </Banner>
            </Side>
          </Columns>
        </Page>
        <Scrollbar>
          <ScrollEnd />
          <Thumb />
          <ScrollEnd $down />
        </Scrollbar>
      </Viewport>
      <Taskbar>
        <Apps>
          {apps.map((a, i) => (
            <AppSlot key={i} $running={a.running}>{a.icon}</AppSlot>
          ))}
        </Apps>
        <Tray>
          <svg width="14" height="8" viewBox="0 0 14 8" fill="none" stroke="#fff" strokeWidth="1.2">
            <path d="M1 7l6-6 6 6" />
          </svg>
          <TrayText $width={54}>ESP<br />LAA</TrayText>
          <TrayIcons>
            <svg width="18" height="16" viewBox="0 0 18 16" fill="none" stroke="#fff">
              <path d="M11 1.500H1.500v10h13V8M4 15.500h8M6 11.500v4M10 11.500v4" />
              <path d="M12.500.5h4v5h-4zM14.500 5.500v8" />
            </svg>
            <svg width="18" height="14" viewBox="0 0 18 14" fill="none" stroke="#fff">
              <path d="M1 4.800h2.500L7.500 1.500v11L3.500 9.200H1z" />
              <path d="M10 4.500q1.500 2.500 0 5M12.300 3q2.700 4 0 8M14.600 1.500q3.800 5.500 0 11" />
            </svg>
          </TrayIcons>
          <TrayText $width={56} $align="right">13:21<br />8/05/2024</TrayText>
          <Badge>1</Badge>
        </Tray>
      </Taskbar>
    </Screen>
  );
}
